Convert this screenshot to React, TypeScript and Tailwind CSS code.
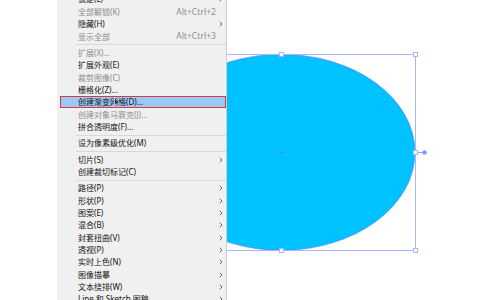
import React from "react";

type Item =
  | "sep"
  | {
      label: string;
      shortcut?: string;
      disabled?: boolean;
      sub?: boolean;
      active?: boolean;
    };

// Illustrator "对象" menu, scrolled part way down
const ITEMS: Item[] = [
  { label: "锁定(L)", sub: true },
  { label: "全部解锁(K)", shortcut: "Alt+Ctrl+2", disabled: true },
  { label: "隐藏(H)", sub: true },
  { label: "显示全部", shortcut: "Alt+Ctrl+3", disabled: true },
  "sep",
  { label: "扩展(X)...", disabled: true },
  { label: "扩展外观(E)" },
  { label: "裁剪图像(C)", disabled: true },
  { label: "栅格化(Z)..." },
  { label: "创建渐变网格(D)...", active: true },
  { label: "创建对象马赛克(J)...", disabled: true },
  { label: "拼合透明度(F)..." },
  "sep",
  { label: "设为像素级优化(M)" },
  "sep",
  { label: "切片(S)", sub: true },
  { label: "创建裁切标记(C)" },
  "sep",
  { label: "路径(P)", sub: true },
  { label: "形状(P)", sub: true },
  { label: "图案(E)", sub: true },
  { label: "混合(B)", sub: true },
  { label: "封套扭曲(V)", sub: true },
  { label: "透视(P)", sub: true },
  { label: "实时上色(N)", sub: true },
  { label: "图像描摹", sub: true },
  { label: "文本绕排(W)", sub: true },
  { label: "Line 和 Sketch 图稿", sub: true },
];

function Chevron() {
  return (
    <svg width="4" height="6" viewBox="0 0 4 6" className="block">
      <path d="M0.8 0.8 L3 3 L0.8 5.2" fill="none" stroke="#5a5a5a" strokeWidth="0.9" />
    </svg>
  );
}

function Canvas() {
  const box = "#a7b6fd";
  const handles: [number, number][] = [
    [281.5, 54.5],
    [415.5, 54.5],
    [415.5, 152.5],
    [415.5, 250.5],
    [281.5, 250.5],
  ];
  return (
    <svg width="480" height="300" className="absolute inset-0">
      <ellipse cx="281.3" cy="152.3" rx="133.7" ry="98" fill="#00c2ff" stroke="#5f86ff" strokeWidth="0.7" />
      <rect x="147.5" y="54.5" width="268" height="196" fill="none" stroke={box} strokeWidth="1" />
      {handles.map(([x, y]) => (
        <rect key={`${x}-${y}`} x={x - 2} y={y - 2} width="4" height="4" fill="#fff" stroke={box} strokeWidth="1" />
      ))}
      <line x1="417.5" y1="152.5" x2="423" y2="152.5" stroke="#93a3fd" strokeWidth="1" />
      <circle cx="424.5" cy="152.5" r="2.3" fill="#8797fd" />
      <rect x="280.5" y="151.5" width="2" height="2" fill="#6678fb" />
    </svg>
  );
}

export default function App() {
  return (
    <div
      className="relative w-[480px] h-[300px] overflow-hidden bg-white"
      style={{ fontFamily: '"Noto Sans", "Noto Sans CJK SC", sans-serif' }}
    >
      <Canvas />

      {/* Context menu */}
      <div className="absolute left-[57px] top-0 w-[170px] h-[300px] bg-[#f0f0f0] border-r border-[#cfcfcf] pl-[3px]">
        <div className="-mt-[6.7px] flex flex-col">
          {ITEMS.map((item, i) => {
            if (item === "sep") {
              return (
                <div key={i} className="h-[4px] flex items-center pl-[16px]">
                  <div className="h-px w-full bg-[#d9d9d9]" />
                </div>
              );
            }
            return (
              <div
                key={i}
                className={
                  "h-[12.35px] flex items-center pl-[18px] text-[8px] leading-none whitespace-nowrap " +
                  (item.active ? "bg-[#99c9f4] outline outline-1 -outline-offset-1 outline-[#e3353f] " : "") +
                  (item.disabled ? "text-[#8d8d8d]" : "text-[#141414]")
                }
              >
                <span className="flex-1">{item.label}</span>
                {item.shortcut && <span className="text-[8.6px]">{item.shortcut}</span>}
                <span className="w-[10px] pl-[3px] flex items-center">{item.sub && <Chevron />}</span>
              </div>
            );
          })}
        </div>
      </div>

      {/* Mouse pointer */}
      <svg width="7" height="11" viewBox="0 0 7 11" className="absolute left-[114px] top-[97px]">
        <path
          d="M0.5 0.5 L0.5 8.5 L2.4 6.8 L3.8 9.8 L5 9.2 L3.6 6.3 L6 6.2 Z"
          fill="#22365f"
          stroke="#ffffff"
          strokeWidth="0.6"
        />
      </svg>
    </div>
  );
}
